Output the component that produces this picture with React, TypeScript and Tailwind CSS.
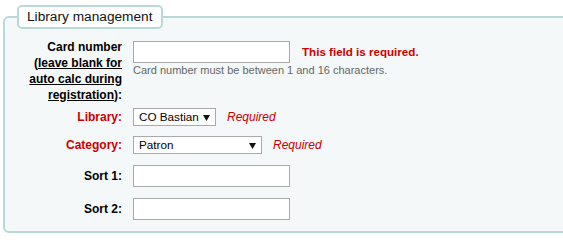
import React from 'react';

const Caret: React.FC = () => (
    <svg width="7" height="7" viewBox="0 0 7 7" className="shrink-0">
        <path d="M0 1 L7 1 L3.5 7 Z" fill="#111" />
    </svg>
);

const Select: React.FC<{ value: string; width: string }> = ({ value, width }) => (
    <div className={`${width} h-[18px] bg-white border border-[#a9a9a9] flex items-center justify-between pl-[5px] pr-[5px] text-[11.7px] text-black leading-none`}>
        <span>{value}</span>
        <Caret />
    </div>
);

const TextBox: React.FC = () => (
    <input type="text" className="w-[157px] h-[22px] bg-white border border-[#a9a9a9] outline-none" />
);

const App: React.FC = () => {
    return (
        <div className="h-[243px] bg-white overflow-hidden font-['Liberation_Sans',Arial,sans-serif] text-[12px] text-black">
            <fieldset className="mt-[5px] ml-[3px] mr-[-12px] border-2 border-[#b9d8d9] rounded-[6px] bg-[#f4f8f9] pl-[12px] pb-[11px] min-w-0">
                <legend className="h-[24px] px-[8px] bg-white border-2 border-[#b9d8d9] rounded-[5px] text-[13.7px] leading-[20px] text-[#111]">
                    Library management
                </legend>

                {/* Card number */}
                <div className="flex items-start mt-[10px]">
                    <label className="w-[105px] shrink-0 text-right font-bold leading-[16px]">
                        Card number <br />
                        (<span className="underline">leave blank for auto calc during registration</span>):
                    </label>
                    <div className="ml-[11px] mt-[2px]">
                        <div className="flex items-center">
                            <TextBox />
                            <span className="ml-[12px] font-bold text-[#cc0000] text-[11.6px]">This field is required.</span>
                        </div>
                        <div className="text-[11px] text-[#666] leading-[14px]">
                            Card number must be between 1 and 16 characters.
                        </div>
                    </div>
                </div>

                {/* Library */}
                <div className="flex items-center mt-[5px]">
                    <label className="w-[105px] shrink-0 text-right font-bold text-[#cc0000]">Library:</label>
                    <div className="ml-[11px]">
                        <Select value="CO Bastian" width="w-[83px]" />
                    </div>
                    <span className="ml-[11px] italic text-[#cc0000]">Required</span>
                </div>

                {/* Category */}
                <div className="flex items-center mt-[10px]">
                    <label className="w-[105px] shrink-0 text-right font-bold text-[#cc0000]">Category:</label>
                    <div className="ml-[11px]">
                        <Select value="Patron" width="w-[129px]" />
                    </div>
                    <span className="ml-[11px] italic text-[#cc0000]">Required</span>
                </div>

                {/* Sort 1 */}
                <div className="flex items-center mt-[11px]">
                    <label className="w-[105px] shrink-0 text-right font-bold">Sort 1:</label>
                    <div className="ml-[11px]">
                        <TextBox />
                    </div>
                </div>

                {/* Sort 2 */}
                <div className="flex items-center mt-[11px]">
                    <label className="w-[105px] shrink-0 text-right font-bold">Sort 2:</label>
                    <div className="ml-[11px]">
                        <TextBox />
                    </div>
                </div>
            </fieldset>
        </div>
    );
};

export default App;
